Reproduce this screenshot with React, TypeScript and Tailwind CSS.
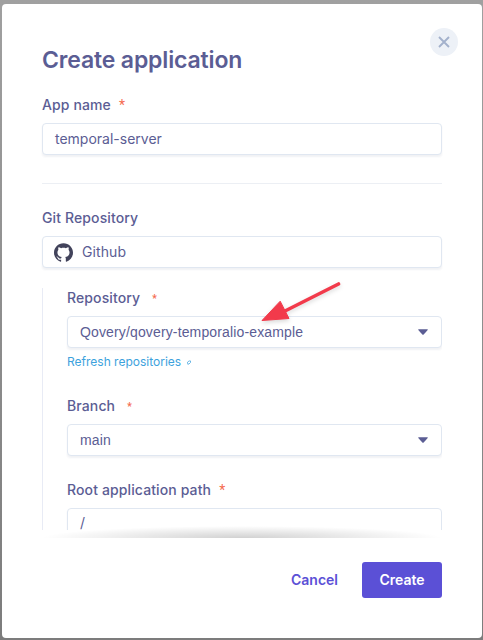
import React from "react";
import { SiGithub } from "react-icons/si";

const field =
  "flex h-8 items-center rounded-[4px] border border-[#e0e7f1] bg-white text-[14px] text-[#5b5d94] shadow-[0_2px_2px_rgba(60,70,110,0.07)]";

function Label({ text, star }: { text: string; star?: string }) {
  return (
    <div className="flex h-5 items-center whitespace-nowrap text-[14px] font-medium leading-5 text-[#5b5d94]">
      <span className="tracking-[0.12px]">{text}</span>
      {star && <span className={star}>*</span>}
    </div>
  );
}

function Select({ value }: { value: string }) {
  return (
    <div className={field + " justify-between pl-3 pr-[13px] font-['Liberation_Sans',sans-serif]"}>
      <span className="tracking-[0.14px]">{value}</span>
      <svg width="10" height="6" viewBox="0 0 10 6" className="block" aria-hidden="true">
        <path d="M0.8 0.2h8.4q.9 0 .5.8L5.7 5.4q-.7.6-1.4 0L.3 1Q-.1.2.8.2Z" fill="#5b5d94" />
      </svg>
    </div>
  );
}

const smallStar = "ml-[12px] pt-px font-['Roboto',sans-serif] text-[10px] font-bold text-[#f56b4f]";
const bigStar = "ml-[8px] font-['Roboto',sans-serif] text-[14px] font-normal text-[#f56b4f]";

export default function App() {
  return (
    <div className="h-[640px] w-[483px] bg-gradient-to-b from-[#a0a0a0] to-[#7c7c7c] pl-[2px] pr-px pt-1 font-['Inter',sans-serif]">
      <div className="relative h-[634px] w-[480px] rounded-[4px] bg-white px-10 pt-10">
        <button aria-label="Close" className="absolute right-6 top-6 flex size-7 items-center justify-center rounded-full bg-[#edf1f7]">
          <svg width="12" height="12" viewBox="0 0 12 12" aria-hidden="true">
            <path d="M1 1l10 10M11 1L1 11" stroke="#a3b1cc" strokeWidth="1.9" />
          </svg>
        </button>

        <h1 className="h-8 whitespace-nowrap text-[23px] font-semibold leading-8 tracking-[-0.15px] text-[#5b5d94]">
          Create application
        </h1>

        <div className="mt-[19px]">
          <Label text="App name" star={bigStar} />
          <div className={field + " mt-2 px-3 pb-[2px]"}>temporal-server</div>
        </div>

        <div className="mt-7 h-px bg-[#eceff4]" />

        <div className="mt-6">
          <Label text="Git Repository" />
          <div className={field + " mt-2 px-[11px]"}>
            <SiGithub className="mr-[9px] size-[19px] text-[#42435b]" />
            <span className="pb-[2px] tracking-[0.1px]">Github</span>
          </div>
        </div>

        <div className="relative mt-5 h-[250px] overflow-hidden">
          <div className="h-[242px] overflow-hidden border-l border-[#e8ebf5] pl-6">
            <Label text="Repository" star={smallStar} />
            <div className="mt-2">
              <Select value="Qovery/qovery-temporalio-example" />
            </div>
            <div className="mt-1 flex h-5 items-center whitespace-nowrap text-[12px] text-[#3da2dd]">
              Refresh repositories
              <svg className="ml-[6px]" width="4" height="5" viewBox="0 0 4 5" fill="none" aria-hidden="true">
                <path d="M.5 3.7V2.2L2 1h.5M3.5 1v1.5L2 4h-.8M2.5 .8h1M.5 4.1h1" stroke="#3da2dd" strokeWidth=".75" />
              </svg>
            </div>
            <div className="mt-6">
              <Label text="Branch" star={smallStar} />
              <div className="mt-2">
                <Select value="main" />
              </div>
            </div>
            <div className="mt-6">
              <Label text="Root application path" star={bigStar} />
              <div className={field + " mt-2 px-3 pb-[2px] leading-none"}>/</div>
            </div>
          </div>
          <div className="absolute bottom-0 left-0 h-3 w-full bg-[radial-gradient(ellipse_50%_100%_at_50%_100%,rgba(0,0,0,0.18),rgba(0,0,0,0)_100%)]" />
        </div>

        <div className="mt-6 flex h-9 items-center justify-end text-[14px] font-semibold">
          <button className="mr-6 pb-[2px] text-[#5b50d6]">Cancel</button>
          <button className="h-9 w-20 rounded-[3px] bg-[#5b50d6] pb-[2px] text-white">Create</button>
        </div>

        <svg className="absolute left-[256px] top-[276px] drop-shadow-[0_2px_2px_rgba(0,0,0,0.15)]" width="88" height="48" viewBox="258 280 88 48" aria-hidden="true">
          <path d="M338.5 284L284 311.5" stroke="#f23a4b" strokeWidth="3.6" strokeLinecap="round" />
          <path d="M262 320.5L280.2 301.2L289 318.5Z" fill="#f23a4b" stroke="#f23a4b" strokeWidth="1" strokeLinejoin="round" />
        </svg>
      </div>
    </div>
  );
}
